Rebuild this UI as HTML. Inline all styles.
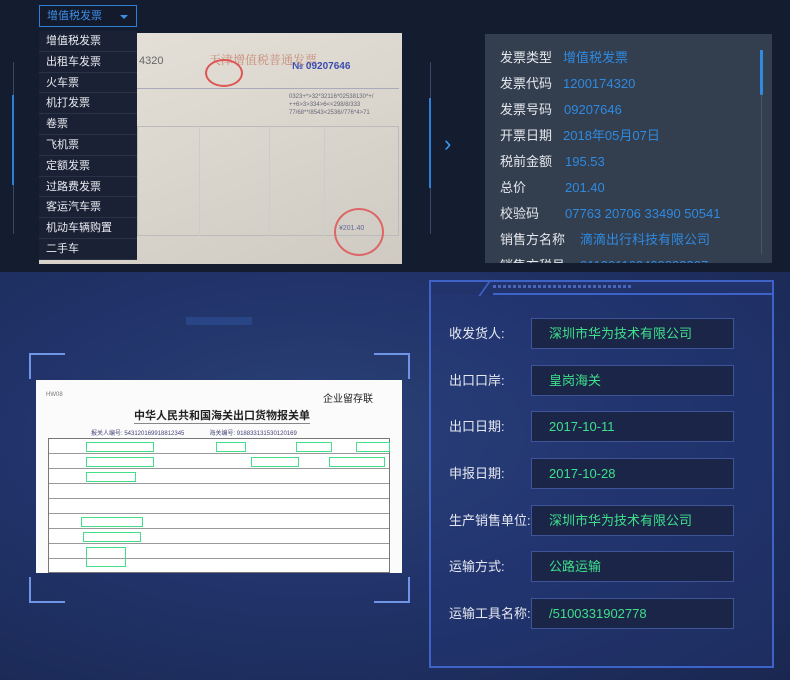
<!DOCTYPE html>
<html><head><meta charset="utf-8"><style>
*{margin:0;padding:0;box-sizing:border-box}
body{width:790px;height:680px;overflow:hidden;background:#131b2e;font-family:"Liberation Sans","Noto Sans CJK SC",sans-serif;position:relative}
.abs{position:absolute}
.top{left:0;top:0;width:790px;height:272px;background:#141c30}
.bot{left:0;top:272px;width:790px;height:408px;background:radial-gradient(ellipse at 40% 40%,#2b4276 0%,#21336a 45%,#192750 100%)}
.dd{left:39px;top:5px;width:98px;height:22px;border:1px solid #2f7fd8;background:#121a2c;color:#3d8ee6;font-size:11px;line-height:20px;padding-left:7px}
.dd:after{content:"";position:absolute;right:8px;top:9px;border:4px solid transparent;border-top:4px solid #3d8ee6}
.menu{left:39px;top:31px;width:98px}
.menu div{height:20.8px;background:#1a2134;border-bottom:1px solid #2a3246;color:#e8ebf0;font-size:11px;line-height:20px;padding-left:7px}
.photo{left:39px;top:33px;width:363px;height:231px;background:linear-gradient(160deg,#e6e1d8,#d8d4cc 60%,#cfcac2);overflow:hidden}
.panel{left:485px;top:34px;width:287px;height:229px;background:#333e4f;overflow:hidden}
.row{position:absolute;left:15px;font-size:13px;line-height:18px;height:18px;color:#e6e9ee;white-space:nowrap}
.row span{position:absolute;top:0;color:#2f8ae0}
.frame{left:429px;top:280px;width:345px;height:388px;border:2px solid #3d63c8;background:rgba(40,60,130,.3)}
.lab{position:absolute;left:449px;color:#e6e9f2;font-size:13px;line-height:31px;height:31px}
.box{position:absolute;left:531px;width:203px;height:31px;border:1px solid #3d5499;background:#1a2548;color:#3ee08a;font-size:13px;line-height:29px;padding-left:17px}
.doc{left:36px;top:380px;width:366px;height:193px;background:#fbfbfb}
.c{position:absolute;width:36px;height:26px;border-color:#6f95e6;border-style:solid;border-width:0}
</style></head><body>
<div class="abs top"></div>
<div class="abs bot"></div>
<div class="abs" style="left:13px;top:62px;width:10px;height:172px;border-left:1px solid #3a4663"></div>
<div class="abs" style="left:12px;top:95px;width:2px;height:90px;background:#2f7fd8"></div>
<div class="abs photo">
 <div class="abs" style="left:170px;top:18px;font-size:12px;color:#c88d7a;font-family:'Liberation Serif','Noto Serif CJK SC',serif">天津增值税普通发票</div>
 <div class="abs" style="left:100px;top:22px;font-size:11px;color:#666">4320</div>
 <div class="abs" style="left:253px;top:28px;font-size:10px;color:#3a4bb0;font-weight:bold">№ 09207646</div>
 <div class="abs" style="left:166px;top:26px;width:38px;height:28px;border:2px solid #d55;border-radius:50%"></div>
 <div class="abs" style="left:98px;top:55px;width:262px;height:1px;background:#aab"></div>
 <div class="abs" style="left:250px;top:60px;width:112px;height:32px;font-size:6px;color:#667;line-height:8px">0323+*>32*32116*02538130*+/ ++6>3&gt;334&gt;6&lt;&lt;298/8/333 77/68**/8543&lt;2536//776*4&gt;71</div>
 <div class="abs" style="left:98px;top:93px;width:262px;height:110px;border:1px solid #bbb"></div>
 <div class="abs" style="left:160px;top:93px;width:1px;height:110px;background:#ccc"></div>
 <div class="abs" style="left:230px;top:93px;width:1px;height:110px;background:#ccc"></div>
 <div class="abs" style="left:285px;top:93px;width:1px;height:110px;background:#ccc"></div>
 <div class="abs" style="left:300px;top:192px;font-size:7px;color:#669">¥201.40</div>
 <div class="abs" style="left:295px;top:175px;width:50px;height:48px;border:2px solid #d66;border-radius:50%"></div>
</div>
<div class="abs dd">增值税发票</div>
<div class="abs menu"><div>增值税发票</div><div>出租车发票</div><div>火车票</div><div>机打发票</div><div>卷票</div><div>飞机票</div><div>定额发票</div><div>过路费发票</div><div>客运汽车票</div><div>机动车辆购置</div><div>二手车</div></div>
<div class="abs" style="left:421px;top:62px;width:10px;height:172px;border-right:1px solid #3a4663"></div>
<div class="abs" style="left:429px;top:98px;width:2px;height:90px;background:#2f7fd8"></div>
<div class="abs" style="left:444px;top:131px;color:#3d9af0;font-size:22px">›</div>
<div class="abs panel">
 <div class="row" style="top:15px">发票类型<span style="left:63px">增值税发票</span></div>
 <div class="row" style="top:41px">发票代码<span style="left:63px">1200174320</span></div>
 <div class="row" style="top:67px">发票号码<span style="left:64px">09207646</span></div>
 <div class="row" style="top:93px">开票日期<span style="left:63px">2018年05月07日</span></div>
 <div class="row" style="top:119px">税前金额<span style="left:65px">195.53</span></div>
 <div class="row" style="top:145px">总价<span style="left:65px">201.40</span></div>
 <div class="row" style="top:171px">校验码<span style="left:65px">07763 20706 33490 50541</span></div>
 <div class="row" style="top:197px">销售方名称<span style="left:80px">滴滴出行科技有限公司</span></div>
 <div class="row" style="top:223px">销售方税号<span style="left:80px">911201163409833307</span></div>
 <div class="abs" style="left:275px;top:16px;width:3px;height:45px;background:#2f8ae0"></div>
 <div class="abs" style="left:276px;top:60px;width:1px;height:160px;background:#4a5568"></div>
</div>
<div class="c" style="left:29px;top:353px;border-top-width:2px;border-left-width:2px"></div>
<div class="c" style="left:374px;top:353px;border-top-width:2px;border-right-width:2px"></div>
<div class="c" style="left:29px;top:577px;border-bottom-width:2px;border-left-width:2px"></div>
<div class="c" style="left:374px;top:577px;border-bottom-width:2px;border-right-width:2px"></div>
<div class="abs" style="left:186px;top:317px;width:66px;height:8px;background:#2a4585"></div>
<div class="abs doc">
 <div class="abs" style="left:10px;top:12px;font-size:6px;color:#777">HW08</div>
 <div class="abs" style="left:287px;top:10px;font-size:10px;color:#222">企业留存联</div>
 <div class="abs" style="left:98px;top:27px;font-size:11px;color:#222;font-weight:bold;border-bottom:1px solid #888">中华人民共和国海关出口货物报关单</div>
 <div class="abs" style="left:55px;top:48px;font-size:6px;color:#447">报关人编号: 543120169918812345 &nbsp;&nbsp;&nbsp;&nbsp;&nbsp;&nbsp;&nbsp;&nbsp;&nbsp;&nbsp;&nbsp;&nbsp;&nbsp;&nbsp;海关编号: 918833131530120169</div>
 <div class="abs" style="left:12px;top:58px;width:342px;height:135px;border:1px solid #777;background:repeating-linear-gradient(#fff 0 14px,#999 14px 15px)"></div>
 <div class="abs" style="left:50px;top:62px;width:68px;height:10px;border:1px solid #4d8"></div>
 <div class="abs" style="left:50px;top:77px;width:68px;height:10px;border:1px solid #4d8"></div>
 <div class="abs" style="left:50px;top:92px;width:50px;height:10px;border:1px solid #4d8"></div>
 <div class="abs" style="left:180px;top:62px;width:30px;height:10px;border:1px solid #4d8"></div>
 <div class="abs" style="left:260px;top:62px;width:36px;height:10px;border:1px solid #4d8"></div>
 <div class="abs" style="left:320px;top:62px;width:34px;height:10px;border:1px solid #4d8"></div>
 <div class="abs" style="left:215px;top:77px;width:48px;height:10px;border:1px solid #4d8"></div>
 <div class="abs" style="left:293px;top:77px;width:56px;height:10px;border:1px solid #4d8"></div>
 <div class="abs" style="left:45px;top:137px;width:62px;height:10px;border:1px solid #4d8"></div>
 <div class="abs" style="left:47px;top:152px;width:58px;height:10px;border:1px solid #4d8"></div>
 <div class="abs" style="left:50px;top:167px;width:40px;height:20px;border:1px solid #4d8"></div>
</div>
<div class="abs frame"></div>
<div class="abs" style="left:431px;top:282px;width:341px;height:12px;background:#21336a"></div>
<div class="abs" style="left:493px;top:293px;width:279px;height:2px;background:#3d63c8"></div>
<div class="abs" style="left:484px;top:280px;width:2px;height:16px;background:#3d63c8;transform:skewX(-35deg)"></div>
<div class="abs" style="left:493px;top:285px;width:140px;height:3px;background:repeating-linear-gradient(90deg,#4a66b8 0 3px,transparent 3px 5px)"></div>
<div class="lab" style="top:318px">收发货人:</div><div class="box" style="top:318px">深圳市华为技术有限公司</div>
<div class="lab" style="top:365px">出口口岸:</div><div class="box" style="top:365px">皇岗海关</div>
<div class="lab" style="top:411px">出口日期:</div><div class="box" style="top:411px">2017-10-11</div>
<div class="lab" style="top:458px">申报日期:</div><div class="box" style="top:458px">2017-10-28</div>
<div class="lab" style="top:505px">生产销售单位:</div><div class="box" style="top:505px">深圳市华为技术有限公司</div>
<div class="lab" style="top:551px">运输方式:</div><div class="box" style="top:551px">公路运输</div>
<div class="lab" style="top:598px">运输工具名称:</div><div class="box" style="top:598px">/5100331902778</div>
</body></html>
